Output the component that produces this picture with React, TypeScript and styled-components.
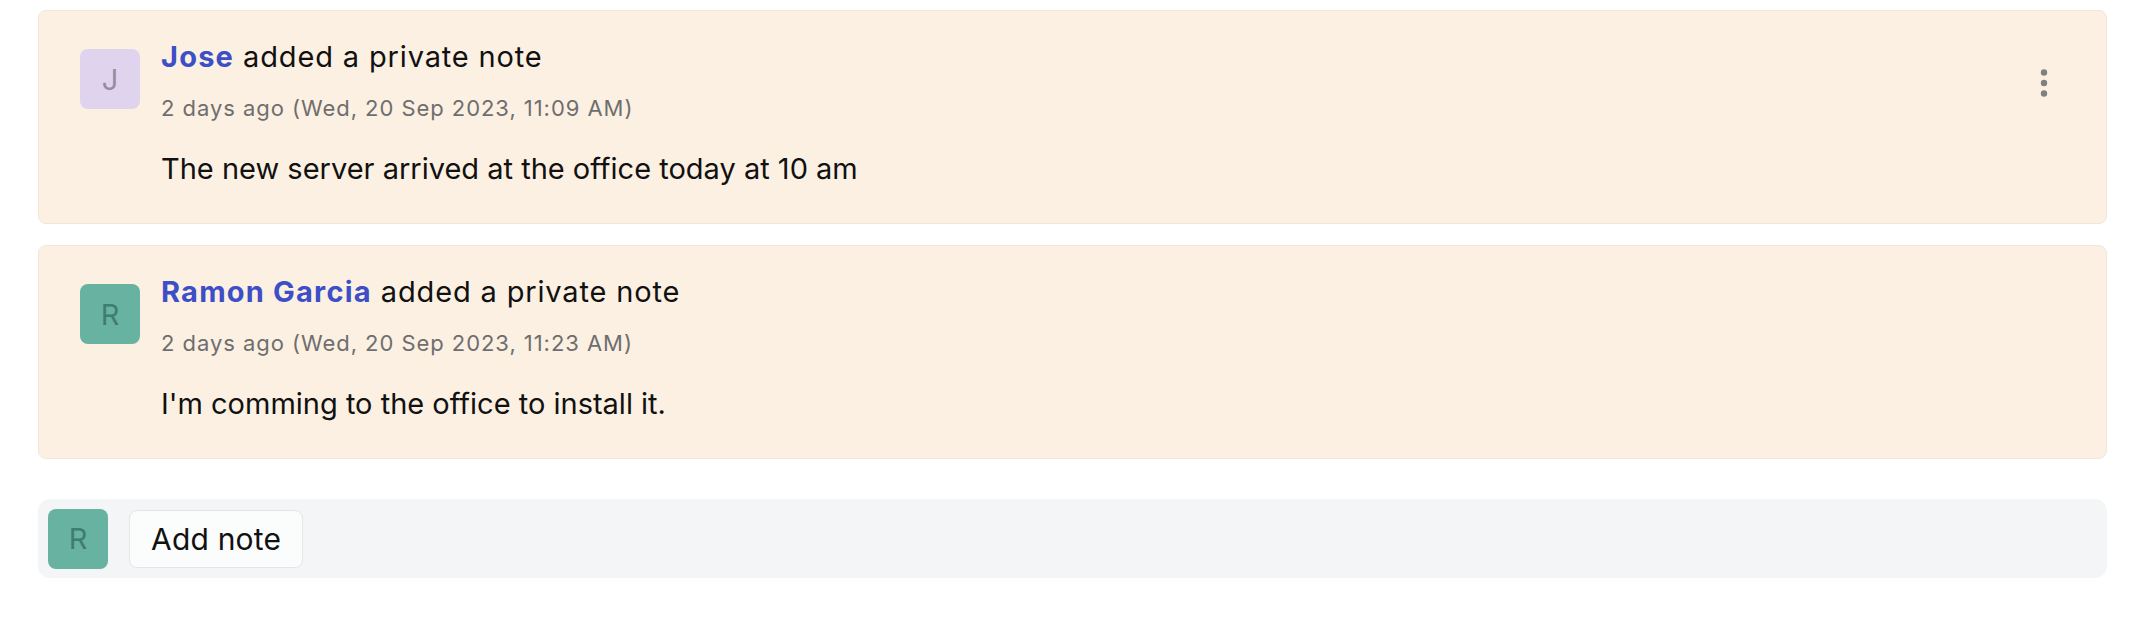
import React from "react";
import styled, { createGlobalStyle } from "styled-components";

const GlobalStyle = createGlobalStyle`
  html, body {
    margin: 0;
    padding: 0;
    background: #ffffff;
    font-family: Inter, "Noto Sans", "Liberation Sans", sans-serif;
    -webkit-font-smoothing: antialiased;
  }
`;

const Page = styled.div`
  display: flex;
  flex-direction: column;
  gap: 21px;
  padding: 10px 27px 0 38px;
`;

const Card = styled.div`
  display: flex;
  align-items: flex-start;
  gap: 21px;
  background: #fcf0e2;
  border: 1px solid #f2e6da;
  border-radius: 8px;
  padding: 29px 46px 37px 41px;
`;

const Avatar = styled.div<{ $bg: string; $fg: string; $offset?: number }>`
  flex: none;
  width: 60px;
  height: 60px;
  border-radius: 8px;
  background: ${(p) => p.$bg};
  color: ${(p) => p.$fg};
  display: flex;
  align-items: center;
  justify-content: center;
  font-size: 29px;
  font-weight: 400;
  margin-top: ${(p) => p.$offset ?? 0}px;
`;

const Content = styled.div`
  flex: 1;
  display: flex;
  flex-direction: column;
`;

const Title = styled.div`
  font-size: 29px;
  line-height: 34px;
  letter-spacing: 0.85px;
  color: #111111;
`;

const Author = styled.a`
  color: #3d4fc6;
  font-weight: 700;
  letter-spacing: 1.2px;
  text-decoration: none;
`;

const Time = styled.div`
  margin-top: 19px;
  font-size: 22px;
  line-height: 30px;
  letter-spacing: 0.95px;
  color: #6e6e6e;
`;

const Body = styled.div`
  margin-top: 29px;
  font-size: 29px;
  line-height: 34px;
  color: #111111;
`;

const MenuButton = styled.button`
  flex: none;
  width: 32px;
  height: 32px;
  margin-top: 27px;
  padding: 0;
  border: none;
  background: transparent;
  display: flex;
  align-items: center;
  justify-content: center;
  cursor: pointer;
`;

const Composer = styled.div`
  margin-top: 19px;
  display: flex;
  align-items: center;
  gap: 21px;
  height: 79px;
  box-sizing: border-box;
  padding: 0 10px;
  background: #f4f5f7;
  border-radius: 12px;
`;

const AddNote = styled.button`
  height: 58px;
  padding: 0 21px;
  border: 1px solid #e3e5e8;
  border-radius: 8px;
  background: #fbfcfc;
  font-family: inherit;
  font-size: 30px;
  letter-spacing: 0.2px;
  color: #111111;
  cursor: pointer;
`;

const Dots = () => (
  <svg width="32" height="32" viewBox="0 0 32 32">
    <circle cx="16" cy="5.5" r="3.2" fill="#808080" />
    <circle cx="16" cy="16" r="3.2" fill="#808080" />
    <circle cx="16" cy="26.5" r="3.2" fill="#808080" />
  </svg>
);

type Note = {
  author: string;
  initial: string;
  bg: string;
  fg: string;
  time: string;
  text: string;
  menu: boolean;
};

const notes: Note[] = [
  {
    author: "Jose",
    initial: "J",
    bg: "#e0d3ee",
    fg: "#978da1",
    time: "2 days ago (Wed, 20 Sep 2023, 11:09 AM)",
    text: "The new server arrived at the office today at 10 am",
    menu: true,
  },
  {
    author: "Ramon Garcia",
    initial: "R",
    bg: "#68b2a2",
    fg: "#3f7d6f",
    time: "2 days ago (Wed, 20 Sep 2023, 11:23 AM)",
    text: "I'm comming to the office to install it.",
    menu: false,
  },
];

export default function App() {
  return (
    <>
      <GlobalStyle />
      <Page>
        {notes.map((n) => (
          <Card key={n.author}>
            <Avatar $bg={n.bg} $fg={n.fg} $offset={9}>
              {n.initial}
            </Avatar>
            <Content>
              <Title>
                <Author href="#">{n.author}</Author> added a private note
              </Title>
              <Time>{n.time}</Time>
              <Body>{n.text}</Body>
            </Content>
            {n.menu && (
              <MenuButton aria-label="More">
                <Dots />
              </MenuButton>
            )}
          </Card>
        ))}
        <Composer>
          <Avatar $bg="#68b2a2" $fg="#3f7d6f">
            R
          </Avatar>
          <AddNote>Add note</AddNote>
        </Composer>
      </Page>
    </>
  );
}
